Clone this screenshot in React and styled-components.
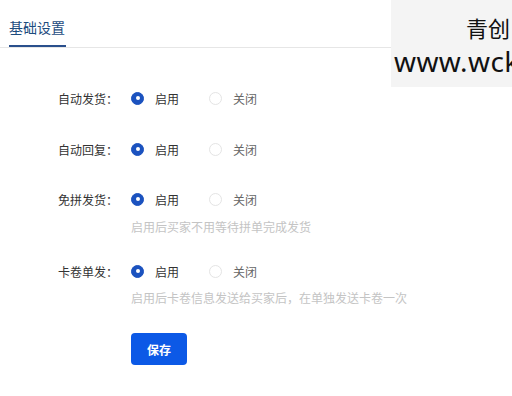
import React, { useState } from "react";
import styled, { createGlobalStyle } from "styled-components";

const GlobalStyle = createGlobalStyle`
  body {
    margin: 0;
    background: #fff;
    font-family: "Noto Sans CJK SC", "Noto Sans", sans-serif;
    font-size: 12px;
    color: #333;
  }
`;

const Page = styled.div`
  position: relative;
  width: 512px;
  height: 396px;
  overflow: hidden;
`;

const TabBar = styled.div`
  display: flex;
  padding-left: 9px;
  border-bottom: 1px solid #e6e6e6;
`;

const Tab = styled.div`
  padding: 17px 1px 7px 0;
  font-size: 14px;
  line-height: 21px;
  color: ${(p) => (p.$active ? "#1d4c7e" : "#666")};
  border-bottom: 2px solid ${(p) => (p.$active ? "#2a4f8c" : "transparent")};
`;

const Form = styled.div`
  display: flex;
  flex-direction: column;
  padding-top: 40px;
`;

const Item = styled.div`
  display: flex;
  flex-direction: column;
  margin-bottom: ${(p) => p.$gap}px;
`;

const Row = styled.div`
  display: flex;
  align-items: center;
  height: 20px;
`;

const Label = styled.div`
  width: 118px;
  text-align: right;
  margin-right: 13px;
  color: #333;
`;

const Option = styled.label`
  display: flex;
  align-items: center;
  margin-right: 30px;
  color: ${(p) => (p.$checked ? "#333" : "#666")};
  cursor: pointer;
`;

const Circle = styled.span`
  box-sizing: border-box;
  width: 13px;
  height: 13px;
  border-radius: 50%;
  margin-right: 11px;
  display: flex;
  align-items: center;
  justify-content: center;
  background: ${(p) => (p.$checked ? "#1b52bf" : "#fff")};
  border: 1px solid ${(p) => (p.$checked ? "#1b52bf" : "#e4e4e4")};

  &::after {
    content: "";
    width: 4px;
    height: 4px;
    border-radius: 50%;
    background: #fff;
    display: ${(p) => (p.$checked ? "block" : "none")};
  }
`;

const Hint = styled.div`
  margin: ${(p) => p.$top}px 0 0 131px;
  line-height: 18px;
  color: #c4c4c4;
`;

const ButtonRow = styled.div`
  display: flex;
  padding-left: 131px;
`;

const SaveButton = styled.button`
  width: 56px;
  height: 32px;
  border: none;
  border-radius: 4px;
  background: #0c59e6;
  color: #fff;
  font-family: inherit;
  font-size: 12px;
  font-weight: bold;
  cursor: pointer;
`;

const Watermark = styled.div`
  position: absolute;
  top: 0;
  right: 0;
  width: 121px;
  height: 87px;
  background: #f4f4f4;
  overflow: hidden;
  display: flex;
  flex-direction: column;
`;

const MarkTitle = styled.div`
  margin-top: 12px;
  padding-right: 2px;
  text-align: right;
  font-size: 22px;
  line-height: 30px;
  color: #111;
`;

const MarkUrl = styled.div`
  margin-top: 2px;
  padding-left: 3px;
  white-space: nowrap;
  font-family: "Noto Sans", sans-serif;
  font-size: 28px;
  letter-spacing: 0.4px;
  line-height: 35px;
  color: #111;
`;

const settings = [
  { key: "autoShip", label: "自动发货：", gap: 31 },
  { key: "autoReply", label: "自动回复：", gap: 30 },
  { key: "noGroup", label: "免拼发货：", hint: "启用后买家不用等待拼单完成发货", hintTop: 9, gap: 25 },
  { key: "cardSingle", label: "卡卷单发：", hint: "启用后卡卷信息发送给买家后，在单独发送卡卷一次", hintTop: 8, gap: 26 },
];

export default function App() {
  const [values, setValues] = useState({
    autoShip: true,
    autoReply: true,
    noGroup: true,
    cardSingle: true,
  });

  const set = (key, v) => setValues((s) => ({ ...s, [key]: v }));

  return (
    <Page>
      <GlobalStyle />
      <TabBar>
        <Tab $active>基础设置</Tab>
      </TabBar>
      <Form>
        {settings.map((s) => (
          <Item key={s.key} $gap={s.gap}>
            <Row>
              <Label>{s.label}</Label>
              <Option $checked={values[s.key]} onClick={() => set(s.key, true)}>
                <Circle $checked={values[s.key]} />
                启用
              </Option>
              <Option $checked={!values[s.key]} onClick={() => set(s.key, false)}>
                <Circle $checked={!values[s.key]} />
                关闭
              </Option>
            </Row>
            {s.hint && <Hint $top={s.hintTop}>{s.hint}</Hint>}
          </Item>
        ))}
        <ButtonRow>
          <SaveButton>保存</SaveButton>
        </ButtonRow>
      </Form>
      <Watermark>
        <MarkTitle>青创</MarkTitle>
        <MarkUrl>www.wck</MarkUrl>
      </Watermark>
    </Page>
  );
}
